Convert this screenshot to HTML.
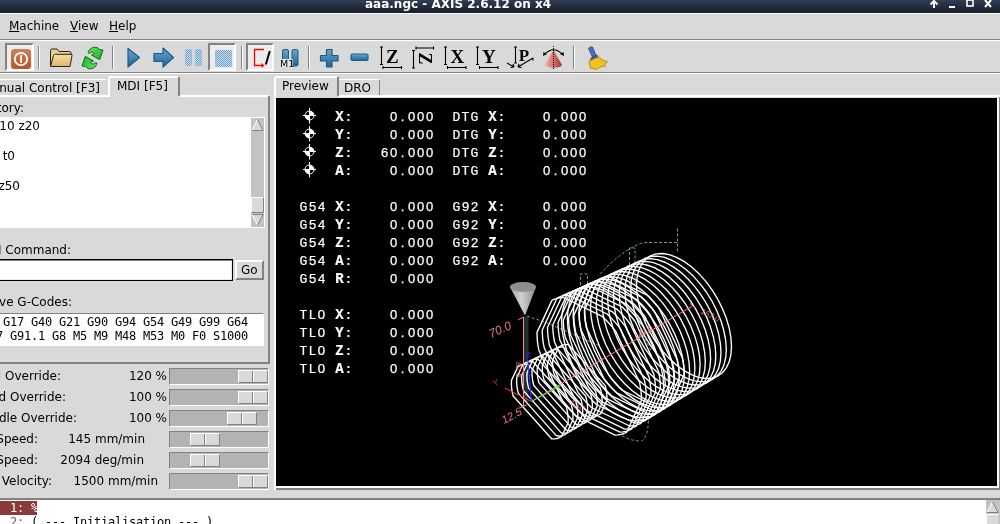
<!DOCTYPE html>
<html>
<head>
<meta charset="utf-8">
<title>aaa.ngc - AXIS 2.6.12 on x4</title>
<style>
html,body{margin:0;padding:0;}
body{width:1000px;height:524px;overflow:hidden;background:#d9d9d9;position:relative;
 font-family:"DejaVu Sans","Liberation Sans",sans-serif;font-size:12px;color:#000;}
.abs{position:absolute;}
.t{position:absolute;white-space:pre;line-height:16px;height:16px;will-change:transform;}
#title{left:0;top:0;width:1000px;height:13px;background:linear-gradient(#323e52,#1c2838 70%,#17212e);overflow:hidden;}
#title .t{color:#fff;font-weight:bold;font-size:12px;top:-4px;left:365px;}
.hl{background:#fff;}
.dk{background:#828282;}
.sunk{box-sizing:border-box;border:1px solid;border-color:#828282 #fff #fff #828282;}
.rais{box-sizing:border-box;border:1px solid;border-color:#fff #828282 #828282 #fff;}
.trough{position:absolute;left:169px;width:100px;height:17px;background:#b3b3b3;box-sizing:border-box;border:1px solid;border-color:#828282 #fff #fff #828282;}
.knob{position:absolute;top:1px;width:30px;height:13px;background:#d9d9d9;box-sizing:border-box;border:1px solid;border-color:#fff #828282 #828282 #fff;}
.knob:after{content:"";position:absolute;left:13px;top:0;width:1px;height:11px;background:#828282;border-right:1px solid #fff;}
.mono{font-family:"DejaVu Sans Mono","Liberation Mono",monospace;font-size:12px;letter-spacing:-0.225px;}
.dro{position:absolute;white-space:pre;height:18px;line-height:18px;color:#fff;font-family:"Liberation Mono","DejaVu Sans Mono",monospace;font-size:13px;will-change:transform;}
.dro i{display:inline-block;width:9px;text-align:center;font-style:normal;-webkit-text-stroke:0.2px #fff;}
.dro i.n{font-family:"Liberation Sans","DejaVu Sans",sans-serif;font-size:13px;-webkit-text-stroke:0.25px #fff;}
.dro i.b{font-weight:bold;font-size:14px;}
.sep{position:absolute;top:46px;width:1px;height:23px;background:#828282;border-right:1px solid #fff;}
.tbtn{position:absolute;top:43px;width:29px;height:28px;box-sizing:border-box;border:2px solid;border-color:#828282 #fff #fff #828282;background:#ececec;}
u{text-decoration:underline;}
</style>
</head>
<body>
<!-- title bar -->
<div id="title" class="abs"><div class="t">aaa.ngc - AXIS 2.6.12 on x4</div>
<svg class="abs" style="left:920px;top:0" width="80" height="13" viewBox="0 0 80 13">
 <g stroke="#fff" stroke-width="2" fill="none">
  <path d="M14 8V1M10.5 4.5L14 1L17.5 4.5"/>
  <path d="M29 7H35"/>
  <rect x="47" y="0" width="6" height="6" stroke-width="1.6"/>
  <path d="M65 0L71 7M71 0L65 7"/>
 </g>
</svg>
</div>
<div class="abs hl" style="left:0;top:13px;width:1000px;height:1px"></div>

<!-- menu bar -->
<div class="t" style="left:9px;top:18px"><u>M</u>achine</div>
<div class="t" style="left:70px;top:18px"><u>V</u>iew</div>
<div class="t" style="left:109px;top:18px"><u>H</u>elp</div>
<div class="abs dk" style="left:0;top:39px;width:1000px;height:1px"></div>
<div class="abs hl" style="left:0;top:40px;width:1000px;height:1px"></div>
<div class="abs dk" style="left:0;top:72px;width:1000px;height:1px"></div>
<div class="abs hl" style="left:0;top:73px;width:1000px;height:1px"></div>
<!-- toolbar -->
<div class="tbtn" style="left:5px"></div>
<div class="tbtn" style="left:208px;width:28px"></div>
<div class="tbtn" style="left:246px;width:28px"></div>
<div class="sep" style="left:38px"></div>
<div class="sep" style="left:112px"></div>
<div class="sep" style="left:241px"></div>
<div class="sep" style="left:308px"></div>
<div class="sep" style="left:573px"></div>
<svg class="abs" style="left:0;top:41px;will-change:transform" width="640" height="32" viewBox="0 41 640 32">
<defs>
<linearGradient id="gb" x1="0" y1="0" x2="0" y2="1"><stop offset="0" stop-color="#6aa6cf"/><stop offset="1" stop-color="#1f6594"/></linearGradient>
<linearGradient id="gl" x1="0" y1="0" x2="0" y2="1"><stop offset="0" stop-color="#b4d0e4"/><stop offset="1" stop-color="#7fb0d2"/></linearGradient>
<linearGradient id="gf" x1="0" y1="0" x2="0" y2="1"><stop offset="0" stop-color="#f6e0a4"/><stop offset="1" stop-color="#dcb66a"/></linearGradient>
<linearGradient id="go" x1="0" y1="0" x2="0" y2="1"><stop offset="0" stop-color="#cf7d5a"/><stop offset="1" stop-color="#b9552f"/></linearGradient>
<pattern id="st" width="2" height="2" patternUnits="userSpaceOnUse"><rect width="2" height="2" fill="#cbdbe7"/><rect width="1" height="1" fill="#6aa3cb"/><rect x="1" y="1" width="1" height="1" fill="#6aa3cb"/></pattern>
<linearGradient id="gc" x1="0" y1="0" x2="1" y2="0"><stop offset="0" stop-color="#f2b4ac"/><stop offset="0.550" stop-color="#d36a64"/><stop offset="1" stop-color="#8e3a36"/></linearGradient>
</defs>
<rect x="11" y="49" width="20" height="20" rx="3.5" fill="url(#go)"/>
<circle cx="21" cy="59" r="6.2" fill="none" stroke="#fff" stroke-width="1.8"/>
<rect x="20.2" y="55" width="1.7" height="8" fill="#fff"/>
<path d="M50.5 66V50.5q0-1.5 1.5-1.5h5l2 2.5h10.5q1.5 0 1.5 1.5V55" fill="#e8cf8e" stroke="#2a2418" stroke-width="1"/>
<path d="M50.5 66.5L53.5 55.5q0.4-1.2 1.8-1.2H71q1.4 0 1 1.4L70 66.5z" fill="url(#gf)" stroke="#2a2418" stroke-width="1" stroke-linejoin="round"/>
<defs><linearGradient id="gg" x1="0" y1="0" x2="1" y2="1"><stop offset="0" stop-color="#5fe860"/><stop offset="1" stop-color="#18b024"/></linearGradient></defs>
<g fill="url(#gg)" stroke="#0d5a14" stroke-width="0.900" stroke-linejoin="round">
<path id="ra" d="M88 53C89 48.500 93 46.500 97 47.500L99.500 49.500L103 50L99.700 59.700L91.500 55L94.500 53.800C93.500 51.800 92 51.800 91 52.500C90 53.200 89 53.300 88 53Z"/>
<path transform="rotate(180 92.500 58)" d="M88 53C89 48.500 93 46.500 97 47.500L99.500 49.500L103 50L99.700 59.700L91.500 55L94.500 53.800C93.500 51.800 92 51.800 91 52.500C90 53.200 89 53.300 88 53Z"/>
</g>
<path d="M128 48.500L139.500 57.500L128 67z" fill="url(#gb)" stroke="#1c5a86" stroke-width="1.200" stroke-linejoin="round"/>
<path d="M154 53.500h9v-5.500l10.500 9.500l-10.500 9.500v-5.500h-9z" fill="url(#gb)" stroke="#1c5a86" stroke-width="1.200" stroke-linejoin="round"/>
<rect x="185" y="49" width="7" height="17" rx="1.500" fill="url(#st)"/>
<rect x="195" y="49" width="7" height="17" rx="1.500" fill="url(#st)"/>
<rect x="215" y="50" width="17" height="17" rx="1.500" fill="url(#st)"/>
<path d="M264 49.500H254.500V65.500H263" fill="none" stroke="#f00" stroke-width="1.300"/>
<path d="M261.500 63L264.500 65.500L261.500 68z" fill="#f00"/>
<path d="M269.800 51L265.800 64.500" stroke="#000" stroke-width="2"/>
<rect x="282.500" y="49.500" width="6" height="16.500" rx="1.500" fill="url(#gb)" stroke="#1c5a86" stroke-width="1"/>
<rect x="292" y="49.500" width="6" height="16.500" rx="1.500" fill="url(#gb)" stroke="#1c5a86" stroke-width="1"/>
<rect x="280" y="59" width="12.500" height="8.500" fill="#e6e6e6"/>
<text x="280" y="67" font-family="DejaVu Sans, Liberation Sans, sans-serif" font-size="9.500" fill="#000">M1</text>
<path d="M326.500 49.500h5.500v6h6v5.500h-6v6h-5.500v-6h-6v-5.500h6z" fill="url(#gb)" stroke="#1c5a86" stroke-width="1.200" stroke-linejoin="round"/>
<rect x="351" y="54" width="17" height="6.500" rx="1.500" fill="url(#gb)" stroke="#1c5a86" stroke-width="1.200"/>
<g stroke="#000" stroke-width="1.100" fill="none">
<path d="M381.5 47V64.500M380.0 47h3M380.0 64.500h3"/>
<path d="M383.0 67.500H401.5M383.0 66v3M401.5 66v3"/>
<path d="M445.5 47V64.500M444.0 47h3M444.0 64.500h3"/>
<path d="M447.5 67.500H466.0M447.5 66v3M466.0 66v3"/>
<path d="M477.5 47V64.500M476.0 47h3M476.0 64.500h3"/>
<path d="M479.5 67.500H498.0M479.5 66v3M498.0 66v3"/>
<path d="M413.500 50.500V68M412 50.500h3M412 68h3"/>
<path d="M416 48H433.500M416 46.500v3M433.500 46.500v3"/>
<path d="M515.500 47V63M514 47h3M514 63h3"/>
<path d="M507 63L514 67M514 67l-1-3M514 67l-3.500 0.500"/>
<path d="M518 67L533 58M518 67l1-3M518 67l3.500 0.500M533 58v2.500"/>
</g>
<text x="392.300" y="63" font-family="Liberation Serif, DejaVu Serif, serif" font-weight="bold" font-size="19" fill="#000" text-anchor="middle">Z</text>
<text x="457.300" y="63" font-family="Liberation Serif, DejaVu Serif, serif" font-weight="bold" font-size="19" fill="#000" text-anchor="middle">X</text>
<text x="488.800" y="63" font-family="Liberation Serif, DejaVu Serif, serif" font-weight="bold" font-size="19" fill="#000" text-anchor="middle">Y</text>
<text x="524" y="61.200" font-family="Liberation Serif, DejaVu Serif, serif" font-weight="bold" font-size="17" fill="#000" text-anchor="middle">P</text>
<text transform="translate(418.500,58.500) rotate(90)" x="0" y="0" font-family="Liberation Serif, DejaVu Serif, serif" font-weight="bold" font-size="18" fill="#000" text-anchor="middle">Z</text>
<path d="M553.500 50L545 65a8.500 2.800 0 0 0 17 0z" fill="url(#gc)"/>
<path d="M544.500 54.500Q553.500 45 562.500 54.500" fill="none" stroke="#000" stroke-width="1.100"/>
<path d="M543 56l0.500-4l3.500 2zM564 56l-0.500-4l-3.500 2z" fill="#000"/>
<path d="M553.500 46V70" stroke="#000" stroke-width="1" stroke-dasharray="1 1"/>
<path d="M588.500 48.500q1.500-2.500 4-1.500l4 9.500l-3.500 2z" fill="#4a6fb5" stroke="#2a4580" stroke-width="0.800"/>
<path d="M590.500 58.500l6.500-3.500l1.500 3l-7 4z" fill="#3b5fa8" stroke="#2a4580" stroke-width="0.800"/>
<path d="M589 61l9.500-4q4 3.500 9 5l-3 2.500l1 1.500q-6 0-9 3.500l-5-1.500l-1 0.500z" fill="#f2c11d" stroke="#a87d0c" stroke-width="0.800" stroke-linejoin="round"/>
</svg>
<!-- left notebook -->
<div class="abs hl" style="left:0;top:79px;width:106px;height:1px"></div>
<div class="abs hl" style="left:0;top:95px;width:110px;height:2px"></div>
<div class="abs hl" style="left:108px;top:77px;width:2px;height:19px"></div>
<div class="abs hl" style="left:109px;top:76px;width:69px;height:2px"></div>
<div class="abs dk" style="left:178px;top:77px;width:2px;height:19px"></div>
<div class="abs hl" style="left:180px;top:95px;width:89px;height:2px"></div>
<div class="abs dk" style="left:268px;top:96px;width:2px;height:268px"></div>
<div class="abs dk" style="left:0;top:362px;width:270px;height:2px"></div>
<div class="t" style="left:-100px;width:200px;text-align:right;top:80px">Manual Control [F3]</div>
<div class="t" style="left:117px;top:78px">MDI [F5]</div>

<div class="t" style="left:-100px;width:124px;text-align:right;top:100px">History:</div>
<!-- history list -->
<div class="abs" style="left:-30px;top:117px;width:295px;height:111px;background:#fff"></div>
<div class="t" style="left:-100px;width:140px;text-align:right;top:118px">g0 x10 z20</div>
<div class="t" style="left:-100px;width:100px;text-align:right;top:133px">g0</div>
<div class="t" style="left:-100px;width:115px;text-align:right;top:148px">m6 t0</div>
<div class="t" style="left:-100px;width:100px;text-align:right;top:163px">g0</div>
<div class="t" style="left:-100px;width:120px;text-align:right;top:178px">g0 z50</div>
<!-- list scrollbar -->
<div class="abs" style="left:251px;top:118px;width:13px;height:109px;background:#c3c3c3"></div>
<svg class="abs" style="left:251px;top:118px" width="13" height="109" viewBox="0 0 13 109">
 <path d="M6.500 1.500L1 12.500H12z" fill="#d9d9d9"/>
 <path d="M6.500 1.500L1 12.500" stroke="#fff" stroke-width="1" fill="none"/>
 <path d="M6.500 1.500L12 12.500H1" stroke="#828282" stroke-width="1" fill="none"/>
 <rect x="0.500" y="79.500" width="12" height="15" fill="#d9d9d9" stroke="none"/>
 <path d="M0.500 94.500V79.500H12.500" stroke="#fff" fill="none"/>
 <path d="M0.500 94.500H12.500V79.500" stroke="#828282" fill="none"/>
 <path d="M6.500 107.500L1 96.500H12z" fill="#d9d9d9"/>
 <path d="M1 96.500H12" stroke="#828282" stroke-width="1" fill="none"/>
 <path d="M1 96.500L6.500 107.500" stroke="#fff" stroke-width="1" fill="none"/>
 <path d="M6.500 107.500L12 96.500" stroke="#828282" stroke-width="1" fill="none"/>
</svg>

<div class="t" style="left:-100px;width:171px;text-align:right;top:242px">MDI Command:</div>
<!-- entry -->
<div class="abs" style="left:-30px;top:259px;width:263px;height:22px;background:#fff;box-sizing:border-box;border:1px solid #000;box-shadow:inset 1px 1px 0 #828282, inset -1px -1px 0 #e8e8e8"></div>
<!-- Go button -->
<div class="abs rais" style="left:235px;top:260px;width:29px;height:20px;border-width:2px"></div>
<div class="t" style="left:241px;top:262px">Go</div>

<div class="t" style="left:-100px;width:172px;text-align:right;top:294px">Active G-Codes:</div>
<div class="abs" style="left:-30px;top:313px;width:294px;height:33px;background:#fff;box-sizing:border-box;border:1px solid;border-color:#828282 #fff #fff #828282"></div>
<div class="t mono" style="left:-25px;top:314px">G80 G17 G40 G21 G90 G94 G54 G49 G99 G64</div>
<div class="t mono" style="left:-18px;top:328px">G97 G91.1 G8 M5 M9 M48 M53 M0 F0 S1000</div>

<!-- sliders -->
<div class="t" style="left:-100px;width:161px;text-align:right;top:368px">Feed Override:</div>
<div class="t" style="left:0;width:167px;text-align:right;top:368px">120 %</div>
<div class="trough" style="top:368px"><div class="knob" style="left:68px"></div></div>
<div class="t" style="left:-100px;width:166px;text-align:right;top:389px">Rapid Override:</div>
<div class="t" style="left:0;width:167px;text-align:right;top:389px">100 %</div>
<div class="trough" style="top:389px"><div class="knob" style="left:68px"></div></div>
<div class="t" style="left:-100px;width:177px;text-align:right;top:410px">Spindle Override:</div>
<div class="t" style="left:0;width:167px;text-align:right;top:410px">100 %</div>
<div class="trough" style="top:410px"><div class="knob" style="left:57px"></div></div>
<div class="t" style="left:-100px;width:138px;text-align:right;top:431px">Jog Speed:</div>
<div class="t" style="left:0;width:145px;text-align:right;top:431px">145 mm/min</div>
<div class="trough" style="top:431px"><div class="knob" style="left:20px"></div></div>
<div class="t" style="left:-100px;width:138px;text-align:right;top:452px">Jog Speed:</div>
<div class="t" style="left:0;width:144px;text-align:right;top:452px">2094 deg/min</div>
<div class="trough" style="top:452px"><div class="knob" style="left:20px"></div></div>
<div class="t" style="left:-100px;width:152px;text-align:right;top:473px">Max Velocity:</div>
<div class="t" style="left:0;width:158px;text-align:right;top:473px">1500 mm/min</div>
<div class="trough" style="top:473px"><div class="knob" style="left:68px"></div></div>
<!-- right notebook -->
<div class="abs hl" style="left:274px;top:77px;width:2px;height:413px"></div>
<div class="abs hl" style="left:275px;top:76px;width:62px;height:2px"></div>
<div class="abs dk" style="left:337px;top:77px;width:2px;height:19px"></div>
<div class="abs hl" style="left:339px;top:79px;width:40px;height:1px"></div>
<div class="abs dk" style="left:379px;top:80px;width:1px;height:16px"></div>
<div class="abs hl" style="left:339px;top:95px;width:661px;height:2px"></div>
<div class="t" style="left:282px;top:78px">Preview</div>
<div class="t" style="left:344px;top:80px">DRO</div>
<!-- canvas -->
<div class="abs" style="left:276px;top:98px;width:721px;height:388px;background:#000"></div>
<div class="abs hl" style="left:276px;top:486px;width:723px;height:2px"></div>
<div class="abs dk" style="left:276px;top:488px;width:724px;height:2px"></div>
<div class="abs hl" style="left:997px;top:98px;width:2px;height:390px"></div>
<div class="abs dk" style="left:999px;top:97px;width:1px;height:393px"></div>
<svg class="abs" style="left:276px;top:98px;will-change:transform" width="721" height="388" viewBox="276 98 721 388">
<g fill="none" stroke="#6f9c98" stroke-width="1" stroke-dasharray="3 2">
<path d="M677.500 228.500V252"/>
<path d="M677 242.500H645Q636 244 624 252.500T598 276"/>
<path d="M629.500 285V248H635V285"/>
<path d="M580.500 295V274H587.500V295"/>
<path d="M527 316L546 322.500L600 346"/>
<path d="M622 435.500Q630 441 641.500 441Q648 438 648.500 419"/>
<path d="M572 392L580 410M640 330L652 352"/>
</g>
<rect x="524" y="317" width="4.500" height="85" fill="#1f3030"/>
<g fill="none" stroke="#ffffff" stroke-width="1.35" stroke-linejoin="round">
<path d="M513.2 396.0L512.2 391.9L511.6 387.8L511.4 384.0L511.5 380.4L517.8 366.8L520.0 365.4L522.5 364.6L525.1 364.2L528.0 364.3L566.4 407.1L567.3 411.2L567.9 415.2L568.2 419.1L568.1 422.7L561.7 436.3L559.6 437.6L557.1 438.5L554.5 438.9L551.6 438.8Z"/>
<path d="M518.4 393.4L517.4 389.3L516.8 385.3L516.6 381.4L516.7 377.8L523.0 364.3L525.1 363.0L527.6 362.1L530.2 361.7L533.0 361.8L571.2 404.4L572.2 408.5L572.8 412.5L573.0 416.3L572.9 419.9L566.6 433.5L564.4 434.8L562.0 435.7L559.4 436.0L556.5 435.9Z"/>
<path d="M523.5 390.8L522.5 386.7L521.9 382.7L521.7 378.9L521.8 375.3L528.1 361.8L530.2 360.5L532.7 359.7L535.3 359.3L538.1 359.4L576.1 401.7L577.0 405.8L577.6 409.8L577.9 413.6L577.8 417.2L571.5 430.6L569.3 431.9L566.9 432.8L564.3 433.2L561.5 433.1Z"/>
<path d="M528.6 388.2L527.7 384.1L527.1 380.1L526.9 376.3L527.0 372.8L533.2 359.4L535.3 358.1L537.7 357.2L540.4 356.8L543.2 356.9L580.9 399.0L581.9 403.1L582.5 407.1L582.7 410.8L582.6 414.4L576.4 427.8L574.2 429.1L571.8 429.9L569.2 430.3L566.4 430.2Z"/>
<path d="M533.8 385.5L532.8 381.5L532.2 377.5L532.0 373.8L532.1 370.2L538.3 356.9L540.5 355.6L542.8 354.8L545.4 354.4L548.2 354.5L585.8 396.3L586.7 400.4L587.3 404.3L587.6 408.1L587.4 411.6L581.3 425.0L579.1 426.3L576.7 427.1L574.1 427.5L571.3 427.4Z"/>
<path d="M538.9 382.9L538.0 378.9L537.4 375.0L537.2 371.2L537.3 367.7L543.4 354.4L545.6 353.2L547.9 352.3L550.5 351.9L553.3 352.0L590.6 393.7L591.6 397.7L592.2 401.6L592.4 405.4L592.3 408.9L586.1 422.1L584.0 423.4L581.6 424.2L579.1 424.6L576.3 424.5Z"/>
<path d="M544.1 380.3L543.1 376.3L542.5 372.4L542.3 368.7L542.4 365.1L548.5 352.0L550.7 350.7L553.0 349.9L555.6 349.5L558.3 349.6L595.5 391.0L596.4 395.0L597.0 398.9L597.3 402.6L597.1 406.1L591.0 419.3L588.9 420.6L586.5 421.4L584.0 421.8L581.2 421.7Z"/>
<path d="M549.2 377.7L548.3 373.7L547.7 369.8L547.4 366.1L547.6 362.6L553.7 349.5L555.8 348.2L558.1 347.4L560.7 347.0L563.4 347.1L600.4 388.3L601.3 392.3L601.9 396.2L602.1 399.9L602.0 403.3L595.9 416.4L593.8 417.7L591.5 418.6L588.9 418.9L586.2 418.8Z"/>
<path d="M554.3 375.0L553.4 371.1L552.8 367.2L552.6 363.5L552.7 360.1L558.8 347.0L560.9 345.8L563.2 344.9L565.7 344.6L568.5 344.7L605.2 385.6L606.1 389.6L606.7 393.4L607.0 397.1L606.8 400.6L600.8 413.6L598.7 414.9L596.4 415.7L593.8 416.1L591.1 416.0Z"/>
<path d="M538.9 350.2L538.0 345.6L537.4 341.1L537.1 336.7L537.0 332.4L551.9 300.4L554.5 299.1L557.3 298.3L560.3 297.7L563.4 297.5L602.2 316.4L605.7 319.8L609.2 323.5L612.5 327.3L615.7 331.4L639.6 382.4L640.4 387.0L641.0 391.5L641.4 395.9L641.5 400.2L626.6 432.3L623.9 433.5L621.1 434.3L618.2 434.9L615.1 435.1L576.2 416.2L572.7 412.8L569.3 409.1L566.0 405.3L562.8 401.2Z"/>
<path d="M544.2 347.7L543.3 343.1L542.7 338.6L542.4 334.2L542.3 330.0L557.1 298.0L559.7 296.8L562.5 296.0L565.5 295.4L568.6 295.2L607.2 314.0L610.6 317.4L614.0 321.1L617.4 324.9L620.5 328.9L644.3 379.6L645.2 384.2L645.8 388.7L646.1 393.1L646.2 397.3L631.4 429.2L628.8 430.4L626.0 431.3L623.0 431.9L619.9 432.1L581.3 413.3L577.8 409.9L574.4 406.2L571.1 402.4L567.9 398.4Z"/>
<path d="M549.4 345.1L548.6 340.5L548.0 336.0L547.6 331.7L547.5 327.5L562.3 295.7L564.9 294.5L567.7 293.7L570.6 293.1L573.7 292.9L612.1 311.6L615.6 315.0L618.9 318.6L622.2 322.4L625.4 326.4L649.0 376.9L649.9 381.5L650.5 385.9L650.9 390.3L651.0 394.5L636.2 426.2L633.6 427.4L630.8 428.3L627.9 428.8L624.8 429.1L586.4 410.4L582.9 407.0L579.5 403.4L576.2 399.5L573.1 395.5Z"/>
<path d="M554.7 342.5L553.8 338.0L553.2 333.5L552.9 329.2L552.8 325.0L567.5 293.4L570.1 292.2L572.9 291.4L575.8 290.8L578.8 290.6L617.0 309.2L620.5 312.6L623.8 316.2L627.1 320.0L630.3 324.0L653.8 374.1L654.6 378.7L655.2 383.1L655.6 387.5L655.7 391.7L641.0 423.3L638.4 424.4L635.6 425.3L632.7 425.8L629.7 426.0L591.4 407.5L588.0 404.1L584.6 400.5L581.4 396.7L578.2 392.7Z"/>
<path d="M559.9 340.0L559.1 335.4L558.5 331.0L558.2 326.7L558.1 322.5L572.7 291.1L575.3 289.9L578.0 289.1L580.9 288.5L584.0 288.3L622.0 306.8L625.4 310.2L628.7 313.7L632.0 317.5L635.1 321.5L658.5 371.4L659.4 375.9L660.0 380.4L660.3 384.7L660.4 388.8L645.8 420.3L643.2 421.4L640.5 422.3L637.6 422.8L634.5 423.0L596.5 404.5L593.1 401.2L589.7 397.6L586.5 393.8L583.3 389.9Z"/>
<path d="M565.2 337.4L564.4 332.9L563.8 328.5L563.4 324.2L563.3 320.0L577.9 288.8L580.4 287.6L583.2 286.8L586.1 286.2L589.1 286.0L626.9 304.4L630.3 307.8L633.6 311.3L636.9 315.1L640.0 319.0L663.3 368.7L664.1 373.2L664.7 377.6L665.1 381.9L665.2 386.0L650.6 417.3L648.0 418.4L645.3 419.3L642.4 419.8L639.4 420.0L601.6 401.6L598.2 398.3L594.8 394.7L591.6 391.0L588.5 387.0Z"/>
<path d="M570.5 334.8L569.6 330.3L569.0 325.9L568.7 321.7L568.6 317.5L583.1 286.5L585.6 285.3L588.3 284.4L591.2 283.9L594.2 283.7L631.8 302.0L635.2 305.3L638.5 308.9L641.8 312.6L644.9 316.5L668.0 365.9L668.9 370.4L669.5 374.8L669.8 379.1L669.9 383.2L655.4 414.3L652.9 415.5L650.2 416.3L647.3 416.8L644.3 417.0L606.6 398.7L603.3 395.4L599.9 391.9L596.7 388.1L593.6 384.2Z"/>
<path d="M575.7 332.2L574.9 327.8L574.3 323.4L574.0 319.2L573.9 315.1L588.2 284.1L590.8 283.0L593.5 282.1L596.4 281.6L599.4 281.4L636.8 299.6L640.2 302.9L643.5 306.4L646.7 310.1L649.8 314.1L672.8 363.2L673.6 367.7L674.2 372.0L674.5 376.3L674.6 380.4L660.3 411.3L657.7 412.5L655.0 413.3L652.1 413.8L649.1 414.0L611.7 395.8L608.3 392.5L605.0 389.0L601.8 385.3L598.7 381.4Z"/>
<path d="M581.0 329.7L580.1 325.2L579.6 320.9L579.2 316.7L579.1 312.6L593.4 281.8L596.0 280.6L598.7 279.8L601.5 279.3L604.5 279.1L641.7 297.2L645.1 300.5L648.4 304.0L651.5 307.7L654.6 311.6L677.5 360.5L678.4 364.9L679.0 369.2L679.3 373.5L679.4 377.6L665.1 408.3L662.5 409.5L659.8 410.3L657.0 410.8L654.0 411.0L616.8 392.9L613.4 389.6L610.1 386.1L607.0 382.4L603.9 378.6Z"/>
<path d="M586.2 327.1L585.4 322.7L584.8 318.3L584.5 314.1L584.4 310.1L598.6 279.5L601.1 278.3L603.8 277.5L606.6 277.0L609.6 276.8L646.7 294.8L650.0 298.0L653.3 301.5L656.4 305.2L659.5 309.1L682.3 357.7L683.1 362.1L683.7 366.5L684.0 370.7L684.1 374.7L669.9 405.4L667.4 406.5L664.7 407.3L661.9 407.9L658.9 408.1L621.8 390.0L618.5 386.8L615.2 383.3L612.1 379.6L609.0 375.7Z"/>
<path d="M561.6 321.3L562.2 312.5L564.1 304.7L567.1 298.2L571.3 293.0L576.5 289.4L582.6 287.3L589.4 286.8L596.8 288.0L604.6 290.9L612.6 295.3L620.6 301.1L628.3 308.2L635.7 316.5L642.6 325.6L648.6 335.5L653.8 345.8L658.0 356.4L661.1 366.8L663.0 377.0L663.6 386.5L663.0 395.3L661.1 403.1L658.0 409.6L653.8 414.8L648.6 418.5L642.6 420.5L635.7 421.0L628.3 419.8L620.6 416.9L612.6 412.6L604.6 406.7L596.8 399.6L589.4 391.3L582.6 382.2L576.5 372.3L571.3 362.0L567.1 351.5L564.1 341.0L562.2 330.8Z"/>
<path d="M567.4 318.5L568.0 309.8L569.8 302.1L572.9 295.6L577.0 290.5L582.2 286.8L588.3 284.7L595.1 284.3L602.4 285.5L610.1 288.3L618.1 292.7L626.0 298.5L633.7 305.6L641.1 313.8L647.9 322.9L653.9 332.7L659.1 343.0L663.3 353.4L666.3 363.8L668.2 373.9L668.8 383.4L668.2 392.2L666.3 399.9L663.3 406.4L659.1 411.5L653.9 415.2L647.9 417.3L641.1 417.7L633.7 416.5L626.0 413.7L618.1 409.3L610.1 403.5L602.4 396.4L595.1 388.2L588.3 379.1L582.2 369.3L577.0 359.0L572.9 348.5L569.8 338.1L568.0 328.1Z"/>
<path d="M573.1 315.8L573.8 307.1L575.6 299.5L578.6 293.0L582.8 287.9L587.9 284.2L593.9 282.2L600.7 281.7L608.0 282.9L615.7 285.7L623.6 290.1L631.5 295.8L639.2 302.9L646.5 311.1L653.2 320.1L659.2 329.9L664.4 340.1L668.5 350.5L671.5 360.9L673.4 370.9L674.0 380.4L673.4 389.0L671.5 396.7L668.5 403.2L664.4 408.3L659.2 411.9L653.2 414.0L646.5 414.4L639.2 413.2L631.5 410.4L623.6 406.1L615.7 400.3L608.0 393.3L600.7 385.1L593.9 376.0L587.9 366.3L582.8 356.1L578.6 345.6L575.6 335.3L573.8 325.3Z"/>
<path d="M578.9 313.1L579.5 304.4L581.4 296.8L584.4 290.4L588.5 285.3L593.6 281.7L599.6 279.6L606.3 279.2L613.6 280.4L621.2 283.2L629.1 287.5L636.9 293.2L644.6 300.2L651.8 308.3L658.5 317.4L664.5 327.1L669.6 337.2L673.7 347.6L676.8 357.9L678.6 367.8L679.2 377.3L678.6 385.9L676.8 393.5L673.7 399.9L669.6 405.0L664.5 408.6L658.5 410.7L651.8 411.1L644.6 409.9L636.9 407.1L629.1 402.8L621.2 397.1L613.6 390.1L606.3 382.0L599.6 373.0L593.6 363.2L588.5 353.1L584.4 342.7L581.4 332.5L579.5 322.5Z"/>
<path d="M584.7 310.3L585.3 301.7L587.1 294.2L590.1 287.8L594.2 282.7L599.3 279.1L605.2 277.1L611.9 276.7L619.1 277.8L626.8 280.6L634.6 284.9L642.4 290.6L650.0 297.6L657.2 305.6L663.9 314.6L669.8 324.3L674.9 334.4L679.0 344.6L682.0 354.9L683.8 364.8L684.4 374.2L683.8 382.7L682.0 390.3L679.0 396.7L674.9 401.8L669.8 405.4L663.9 407.4L657.2 407.8L650.0 406.7L642.4 403.9L634.6 399.6L626.8 393.9L619.1 386.9L611.9 378.9L605.2 369.9L599.3 360.2L594.2 350.1L590.1 339.8L587.1 329.6L585.3 319.7Z"/>
<path d="M590.5 307.6L591.1 299.1L592.9 291.5L595.9 285.2L599.9 280.1L605.0 276.6L610.9 274.5L617.5 274.1L624.7 275.3L632.3 278.0L640.1 282.3L647.8 288.0L655.4 294.9L662.6 302.9L669.2 311.8L675.1 321.4L680.2 331.5L684.2 341.7L687.2 351.9L689.0 361.8L689.6 371.1L689.0 379.6L687.2 387.1L684.2 393.5L680.2 398.5L675.1 402.1L669.2 404.1L662.6 404.6L655.4 403.4L647.8 400.6L640.1 396.4L632.3 390.7L624.7 383.8L617.5 375.7L610.9 366.8L605.0 357.2L599.9 347.2L595.9 336.9L592.9 326.8L591.1 316.9Z"/>
<path d="M596.2 304.8L596.8 296.4L598.6 288.9L601.6 282.5L605.6 277.5L610.7 274.0L616.6 272.0L623.2 271.5L630.3 272.7L637.8 275.4L645.5 279.7L653.3 285.3L660.8 292.2L667.9 300.2L674.5 309.1L680.4 318.6L685.4 328.6L689.5 338.8L692.5 348.9L694.3 358.7L694.9 368.0L694.3 376.5L692.5 384.0L689.5 390.3L685.4 395.3L680.4 398.8L674.5 400.9L667.9 401.3L660.8 400.1L653.3 397.4L645.5 393.1L637.8 387.5L630.3 380.6L623.2 372.6L616.6 363.7L610.7 354.2L605.6 344.2L601.6 334.0L598.6 323.9L596.8 314.1Z"/>
<path d="M602.0 302.1L602.6 293.7L604.4 286.2L607.3 279.9L611.4 274.9L616.4 271.4L622.2 269.4L628.8 269.0L635.9 270.1L643.4 272.9L651.0 277.1L658.7 282.7L666.2 289.5L673.3 297.5L679.9 306.3L685.7 315.8L690.7 325.7L694.7 335.9L697.7 345.9L699.5 355.7L700.1 364.9L699.5 373.3L697.7 380.8L694.7 387.1L690.7 392.1L685.7 395.6L679.9 397.6L673.3 398.0L666.2 396.8L658.7 394.1L651.0 389.9L643.4 384.3L635.9 377.4L628.8 369.5L622.2 360.7L616.4 351.2L611.4 341.3L607.3 331.1L604.4 321.1L602.6 311.3Z"/>
<path d="M607.7 299.4L608.3 291.0L610.1 283.5L613.1 277.3L617.1 272.3L622.0 268.8L627.9 266.8L634.4 266.4L641.5 267.6L648.9 270.3L656.5 274.5L664.2 280.0L671.6 286.9L678.7 294.8L685.2 303.5L691.0 313.0L696.0 322.9L700.0 332.9L702.9 342.9L704.7 352.6L705.3 361.8L704.7 370.2L702.9 377.6L700.0 383.9L696.0 388.8L691.0 392.3L685.2 394.3L678.7 394.7L671.6 393.6L664.2 390.9L656.5 386.7L648.9 381.1L641.5 374.3L634.4 366.4L627.9 357.6L622.0 348.2L617.1 338.3L613.1 328.2L610.1 318.2L608.3 308.5Z"/>
<path d="M613.5 296.6L614.1 288.3L615.9 280.9L618.8 274.7L622.8 269.7L627.7 266.2L633.5 264.3L640.0 263.8L647.0 265.0L654.4 267.7L662.0 271.9L669.6 277.4L677.0 284.2L684.1 292.0L690.5 300.8L696.3 310.2L701.3 320.0L705.3 330.0L708.2 340.0L710.0 349.6L710.6 358.7L710.0 367.1L708.2 374.4L705.3 380.7L701.3 385.6L696.3 389.1L690.5 391.1L684.1 391.5L677.0 390.3L669.6 387.6L662.0 383.5L654.4 377.9L647.0 371.1L640.0 363.3L633.5 354.6L627.7 345.2L622.8 335.3L618.8 325.3L615.9 315.4L614.1 305.7Z"/>
<path d="M619.3 293.9L619.8 285.6L621.6 278.2L624.5 272.0L628.5 267.1L633.4 263.7L639.1 261.7L645.6 261.3L652.6 262.4L660.0 265.1L667.5 269.2L675.1 274.8L682.4 281.5L689.4 289.3L695.9 298.0L701.6 307.3L706.6 317.1L710.5 327.1L713.4 337.0L715.2 346.6L715.8 355.6L715.2 363.9L713.4 371.3L710.5 377.5L706.6 382.4L701.6 385.8L695.9 387.8L689.4 388.2L682.4 387.1L675.1 384.4L667.5 380.3L660.0 374.7L652.6 368.0L645.6 360.2L639.1 351.5L633.4 342.2L628.5 332.4L624.5 322.4L621.6 312.5L619.8 302.9Z"/>
<path d="M625.0 291.1L625.6 282.8L627.4 275.6L630.2 269.4L634.2 264.5L639.1 261.1L644.8 259.1L651.2 258.7L658.2 259.8L665.5 262.5L673.0 266.6L680.5 272.1L687.8 278.8L694.8 286.6L701.2 295.2L707.0 304.5L711.9 314.2L715.8 324.1L718.7 334.0L720.4 343.5L721.0 352.6L720.4 360.8L718.7 368.1L715.8 374.3L711.9 379.1L707.0 382.6L701.2 384.6L694.8 385.0L687.8 383.8L680.5 381.2L673.0 377.0L665.5 371.6L658.2 364.8L651.2 357.1L644.8 348.4L639.1 339.1L634.2 329.4L630.2 319.5L627.4 309.7L625.6 300.1Z"/>
<path d="M630.8 288.4L631.3 280.1L633.1 272.9L636.0 266.8L639.9 261.9L644.7 258.5L650.4 256.5L656.8 256.1L663.8 257.2L671.0 259.9L678.5 264.0L686.0 269.5L693.3 276.1L700.2 283.9L706.6 292.5L712.3 301.7L717.1 311.4L721.1 321.2L723.9 331.0L725.7 340.5L726.3 349.5L725.7 357.7L723.9 365.0L721.1 371.1L717.1 375.9L712.3 379.4L706.6 381.3L700.2 381.7L693.3 380.6L686.0 377.9L678.5 373.8L671.0 368.4L663.8 361.7L656.8 354.0L650.4 345.4L644.7 336.1L639.9 326.5L636.0 316.6L633.1 306.8L631.3 297.3Z"/>
<path d="M636.5 285.6L637.1 277.4L638.8 270.2L641.7 264.1L645.6 259.3L650.4 255.9L656.1 253.9L662.4 253.5L669.3 254.7L676.6 257.3L684.0 261.4L691.4 266.8L698.7 273.4L705.6 281.1L711.9 289.7L717.6 298.9L722.4 308.5L726.3 318.3L729.2 328.0L730.9 337.5L731.5 346.4L730.9 354.6L729.2 361.8L726.3 367.9L722.4 372.7L717.6 376.1L711.9 378.1L705.6 378.5L698.7 377.3L691.4 374.7L684.0 370.6L676.6 365.2L669.3 358.6L662.4 350.9L656.1 342.3L650.4 333.1L645.6 323.5L641.7 313.7L638.8 304.0L637.1 294.5Z"/>
</g>
<g fill="none" stroke="#ff8287" stroke-width="1">
<path d="M531.400 401.500L692.500 306M690 303.500l5 4"/>
<path d="M523.500 317V406M518 320l5.500-3M519.500 408l8-3.500"/>
</g>
<text transform="translate(491,338) rotate(-24)" font-size="12" font-family="Liberation Sans, DejaVu Sans, sans-serif" font-style="italic" fill="#ff8287" fill-opacity="0.9">70.0</text>
<text transform="translate(504,424) rotate(-28)" font-size="11" font-family="Liberation Sans, DejaVu Sans, sans-serif" font-style="italic" fill="#ff8287" fill-opacity="0.9">12.5</text>
<text transform="translate(700,313) rotate(28)" font-size="8" font-family="Liberation Sans, DejaVu Sans, sans-serif" font-style="italic" fill="#ff8287" fill-opacity="0.9">157.0</text>
<text transform="translate(636,340) rotate(-30)" font-size="8" font-family="Liberation Sans, DejaVu Sans, sans-serif" font-style="italic" fill="#ff8287" fill-opacity="0.9">147.0</text>
<text transform="translate(569,404) rotate(28)" font-size="8" font-family="Liberation Sans, DejaVu Sans, sans-serif" font-style="italic" fill="#ff8287" fill-opacity="0.9">10.0</text>
<text transform="translate(516,362) rotate(90)" font-size="8" font-family="Liberation Sans, DejaVu Sans, sans-serif" font-style="italic" fill="#ff8287" fill-opacity="0.9">82.5</text>
<path d="M531.400 401.500L504.700 388" stroke="#ff3030" stroke-width="1" fill="none"/>
<path d="M531.400 401.500L561 385.500M556 384l4 5" stroke="#30ff30" stroke-width="1" fill="none"/>
<path d="M531.400 401.500L528 360.500" stroke="#3030ff" stroke-width="1.300" fill="none"/>
<text transform="translate(494,386) rotate(-20)" font-size="8" font-family="Liberation Sans, sans-serif" fill="#ff3030">Y</text>
<text x="526" y="357" font-size="8" font-family="Liberation Sans, sans-serif" fill="#3030ff">Z</text>
<defs><linearGradient id="cg" x1="0" y1="0" x2="1" y2="0"><stop offset="0" stop-color="#a8a8a8"/><stop offset="0.450" stop-color="#d0d0d0"/><stop offset="1" stop-color="#8c8c8c"/></linearGradient></defs>
<path d="M510 287L525 315.500L536 287z" fill="url(#cg)"/>
<ellipse cx="523" cy="287" rx="13" ry="5" fill="#8e8e8e"/>
</svg>
<div class="dro" style="left:299px;top:108px"><i> </i><i> </i><i> </i><i> </i><i class="b">X</i><i>:</i><i> </i><i> </i><i> </i><i> </i><i class="n">0</i><i class="n">.</i><i class="n">0</i><i class="n">0</i><i class="n">0</i><i> </i><i> </i><i>D</i><i>T</i><i>G</i><i> </i><i class="b">X</i><i>:</i><i> </i><i> </i><i> </i><i> </i><i class="n">0</i><i class="n">.</i><i class="n">0</i><i class="n">0</i><i class="n">0</i></div>
<div class="dro" style="left:299px;top:126px"><i> </i><i> </i><i> </i><i> </i><i class="b">Y</i><i>:</i><i> </i><i> </i><i> </i><i> </i><i class="n">0</i><i class="n">.</i><i class="n">0</i><i class="n">0</i><i class="n">0</i><i> </i><i> </i><i>D</i><i>T</i><i>G</i><i> </i><i class="b">Y</i><i>:</i><i> </i><i> </i><i> </i><i> </i><i class="n">0</i><i class="n">.</i><i class="n">0</i><i class="n">0</i><i class="n">0</i></div>
<div class="dro" style="left:299px;top:144px"><i> </i><i> </i><i> </i><i> </i><i class="b">Z</i><i>:</i><i> </i><i> </i><i> </i><i class="n">6</i><i class="n">0</i><i class="n">.</i><i class="n">0</i><i class="n">0</i><i class="n">0</i><i> </i><i> </i><i>D</i><i>T</i><i>G</i><i> </i><i class="b">Z</i><i>:</i><i> </i><i> </i><i> </i><i> </i><i class="n">0</i><i class="n">.</i><i class="n">0</i><i class="n">0</i><i class="n">0</i></div>
<div class="dro" style="left:299px;top:162px"><i> </i><i> </i><i> </i><i> </i><i class="b">A</i><i>:</i><i> </i><i> </i><i> </i><i> </i><i class="n">0</i><i class="n">.</i><i class="n">0</i><i class="n">0</i><i class="n">0</i><i> </i><i> </i><i>D</i><i>T</i><i>G</i><i> </i><i class="b">A</i><i>:</i><i> </i><i> </i><i> </i><i> </i><i class="n">0</i><i class="n">.</i><i class="n">0</i><i class="n">0</i><i class="n">0</i></div>
<div class="dro" style="left:299px;top:198px"><i>G</i><i class="n">5</i><i class="n">4</i><i> </i><i class="b">X</i><i>:</i><i> </i><i> </i><i> </i><i> </i><i class="n">0</i><i class="n">.</i><i class="n">0</i><i class="n">0</i><i class="n">0</i><i> </i><i> </i><i>G</i><i class="n">9</i><i class="n">2</i><i> </i><i class="b">X</i><i>:</i><i> </i><i> </i><i> </i><i> </i><i class="n">0</i><i class="n">.</i><i class="n">0</i><i class="n">0</i><i class="n">0</i></div>
<div class="dro" style="left:299px;top:216px"><i>G</i><i class="n">5</i><i class="n">4</i><i> </i><i class="b">Y</i><i>:</i><i> </i><i> </i><i> </i><i> </i><i class="n">0</i><i class="n">.</i><i class="n">0</i><i class="n">0</i><i class="n">0</i><i> </i><i> </i><i>G</i><i class="n">9</i><i class="n">2</i><i> </i><i class="b">Y</i><i>:</i><i> </i><i> </i><i> </i><i> </i><i class="n">0</i><i class="n">.</i><i class="n">0</i><i class="n">0</i><i class="n">0</i></div>
<div class="dro" style="left:299px;top:234px"><i>G</i><i class="n">5</i><i class="n">4</i><i> </i><i class="b">Z</i><i>:</i><i> </i><i> </i><i> </i><i> </i><i class="n">0</i><i class="n">.</i><i class="n">0</i><i class="n">0</i><i class="n">0</i><i> </i><i> </i><i>G</i><i class="n">9</i><i class="n">2</i><i> </i><i class="b">Z</i><i>:</i><i> </i><i> </i><i> </i><i> </i><i class="n">0</i><i class="n">.</i><i class="n">0</i><i class="n">0</i><i class="n">0</i></div>
<div class="dro" style="left:299px;top:252px"><i>G</i><i class="n">5</i><i class="n">4</i><i> </i><i class="b">A</i><i>:</i><i> </i><i> </i><i> </i><i> </i><i class="n">0</i><i class="n">.</i><i class="n">0</i><i class="n">0</i><i class="n">0</i><i> </i><i> </i><i>G</i><i class="n">9</i><i class="n">2</i><i> </i><i class="b">A</i><i>:</i><i> </i><i> </i><i> </i><i> </i><i class="n">0</i><i class="n">.</i><i class="n">0</i><i class="n">0</i><i class="n">0</i></div>
<div class="dro" style="left:299px;top:270px"><i>G</i><i class="n">5</i><i class="n">4</i><i> </i><i class="b">R</i><i>:</i><i> </i><i> </i><i> </i><i> </i><i class="n">0</i><i class="n">.</i><i class="n">0</i><i class="n">0</i><i class="n">0</i></div>
<div class="dro" style="left:299px;top:306px"><i>T</i><i>L</i><i>O</i><i> </i><i class="b">X</i><i>:</i><i> </i><i> </i><i> </i><i> </i><i class="n">0</i><i class="n">.</i><i class="n">0</i><i class="n">0</i><i class="n">0</i></div>
<div class="dro" style="left:299px;top:324px"><i>T</i><i>L</i><i>O</i><i> </i><i class="b">Y</i><i>:</i><i> </i><i> </i><i> </i><i> </i><i class="n">0</i><i class="n">.</i><i class="n">0</i><i class="n">0</i><i class="n">0</i></div>
<div class="dro" style="left:299px;top:342px"><i>T</i><i>L</i><i>O</i><i> </i><i class="b">Z</i><i>:</i><i> </i><i> </i><i> </i><i> </i><i class="n">0</i><i class="n">.</i><i class="n">0</i><i class="n">0</i><i class="n">0</i></div>
<div class="dro" style="left:299px;top:360px"><i>T</i><i>L</i><i>O</i><i> </i><i class="b">A</i><i>:</i><i> </i><i> </i><i> </i><i> </i><i class="n">0</i><i class="n">.</i><i class="n">0</i><i class="n">0</i><i class="n">0</i></div>
<svg class="abs" style="left:300px;top:104px" width="20" height="78" viewBox="300 104 20 78">
<g stroke="#fff" stroke-width="1" fill="none"><circle cx="309.5" cy="115.5" r="4.500"/><path d="M303.0 115.5H316.0M309.5 108.0V123.5"/></g>
<path d="M309.5 115.5V111.0A4.500 4.500 0 0 1 314.0 115.5Z" fill="#fff"/>
<path d="M309.5 115.5V120.0A4.500 4.500 0 0 1 305.0 115.5Z" fill="#fff"/>
<g stroke="#fff" stroke-width="1" fill="none"><circle cx="309.5" cy="133.5" r="4.500"/><path d="M303.0 133.5H316.0M309.5 126.0V141.5"/></g>
<path d="M309.5 133.5V129.0A4.500 4.500 0 0 1 314.0 133.5Z" fill="#fff"/>
<path d="M309.5 133.5V138.0A4.500 4.500 0 0 1 305.0 133.5Z" fill="#fff"/>
<g stroke="#fff" stroke-width="1" fill="none"><circle cx="309.5" cy="151.5" r="4.500"/><path d="M303.0 151.5H316.0M309.5 144.0V159.5"/></g>
<path d="M309.5 151.5V147.0A4.500 4.500 0 0 1 314.0 151.5Z" fill="#fff"/>
<path d="M309.5 151.5V156.0A4.500 4.500 0 0 1 305.0 151.5Z" fill="#fff"/>
<g stroke="#fff" stroke-width="1" fill="none"><circle cx="309.5" cy="169.5" r="4.500"/><path d="M303.0 169.5H316.0M309.5 162.0V177.5"/></g>
<path d="M309.5 169.5V165.0A4.500 4.500 0 0 1 314.0 169.5Z" fill="#fff"/>
<path d="M309.5 169.5V174.0A4.500 4.500 0 0 1 305.0 169.5Z" fill="#fff"/>
</svg>
<!-- bottom text area -->
<div class="abs dk" style="left:0;top:498px;width:1000px;height:2px"></div>
<div class="abs" style="left:0;top:500px;width:1000px;height:24px;background:#fff"></div>
<div class="abs" style="left:0;top:501px;width:37px;height:14px;background:#8b3a3a"></div>
<div class="t mono" style="left:-4px;top:500px;color:#fff">  1: %</div>
<div class="t mono" style="left:-4px;top:514px;color:#000"><span style="color:#666">  2:</span> ( --- Initialisation --- )</div>
<div class="abs" style="left:986px;top:500px;width:14px;height:24px;background:#c3c3c3"></div>
<svg class="abs" style="left:986px;top:500px" width="13" height="24" viewBox="0 0 13 24"><path d="M6.500 1.500L1 12.500H12z" fill="#d9d9d9"/><path d="M6.500 1.500L1 12.500" stroke="#fff" fill="none"/><path d="M6.500 1.500L12 12.500H1" stroke="#828282" fill="none"/><rect x="0.500" y="14.500" width="12" height="10" fill="#d9d9d9"/><path d="M0.500 24V14.500H12.500" stroke="#fff" fill="none"/></svg>

</body>
</html>
